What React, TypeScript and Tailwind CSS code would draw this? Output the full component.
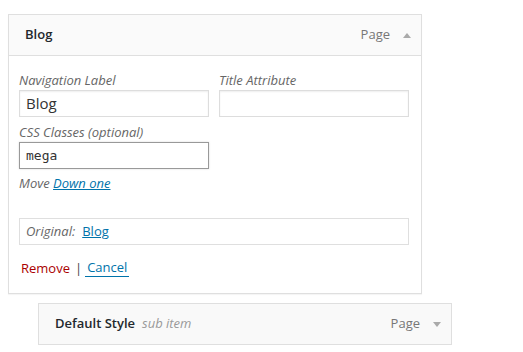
import React from 'react';

const font = { fontFamily: '"Open Sans", "Noto Sans", sans-serif' };

function Arrow({ up }: { up?: boolean }) {
  return (
    <svg width="8" height="5" viewBox="0 0 8 5" className="ml-[13px]">
      {up ? <polygon points="4,0 8,5 0,5" fill="#aaa" /> : <polygon points="0,0 8,0 4,5" fill="#aaa" />}
    </svg>
  );
}

function Field({ label, value, mono, active }: { label: string; value?: string; mono?: boolean; active?: boolean }) {
  return (
    <div className="flex flex-col w-[190px]">
      <label className="italic text-[13px] leading-[19px] text-[#666]">{label}</label>
      <div
        className={`h-[27px] border px-[6px] flex items-center text-[#333] ${
          active ? 'border-[#999] shadow-[0_0_2px_rgba(0,0,0,0.15)]' : 'border-[#ddd] shadow-[inset_0_1px_2px_rgba(0,0,0,0.07)]'
        } ${mono ? 'text-[13px]' : 'text-[15px]'}`}
        style={mono ? { fontFamily: '"DejaVu Sans Mono", monospace' } : undefined}
      >
        {value}
      </div>
    </div>
  );
}

export default function App() {
  return (
    <div className="w-[523px] h-[352px] bg-white pt-[14px] pl-[8px]" style={font}>
      <div className="w-[414px] border border-[#dfdfdf] bg-white shadow-[0_1px_1px_rgba(0,0,0,0.04)]">
        <div className="h-[41px] bg-[#fafafa] border-b border-[#dfdfdf] flex items-center pl-[16px] pr-[10px]">
          <span className="font-semibold text-[13px] text-[#23282d]">Blog</span>
          <span className="ml-auto text-[13px] text-[#777]">Page</span>
          <Arrow up />
        </div>
        <div className="pl-[10px] pr-[12px] pt-[15px] pb-[16px]">
          <div className="flex gap-[10px]">
            <Field label="Navigation Label" value="Blog" />
            <Field label="Title Attribute" />
          </div>
          <div className="mt-[6px]">
            <Field label="CSS Classes (optional)" value="mega" mono active />
          </div>
          <div className="mt-[5px] text-[13px] leading-[18px] italic text-[#666]">
            Move <a className="text-[#0073aa] underline">Down one</a>
          </div>
          <div className="mt-[26px] h-[27px] border border-[#dfdfdf] flex items-center px-[6px] text-[13px]">
            <span className="italic text-[#666]">Original:</span>
            <a className="ml-[7px] text-[#0073aa] underline">Blog</a>
          </div>
          <div className="mt-[13px] ml-[2px] flex items-center text-[13px] leading-[18px]">
            <span className="text-[#a00]">Remove</span>
            <span className="text-[#444] ml-[5px] mr-[3px]">|</span>
            <span className="text-[#0073aa] border-b border-[#0073aa] px-[2px]">Cancel</span>
          </div>
        </div>
      </div>
      <div className="ml-[30px] mt-[9px] w-[414px] h-[42px] border border-[#dfdfdf] bg-[#f9f9f9] flex items-center pl-[16px] pr-[10px]">
        <span className="font-semibold text-[13px] text-[#23282d]">Default Style</span>
        <span className="ml-[7px] italic text-[13px] text-[#999]">sub item</span>
        <span className="ml-auto text-[13px] text-[#777]">Page</span>
        <Arrow />
      </div>
    </div>
  );
}
